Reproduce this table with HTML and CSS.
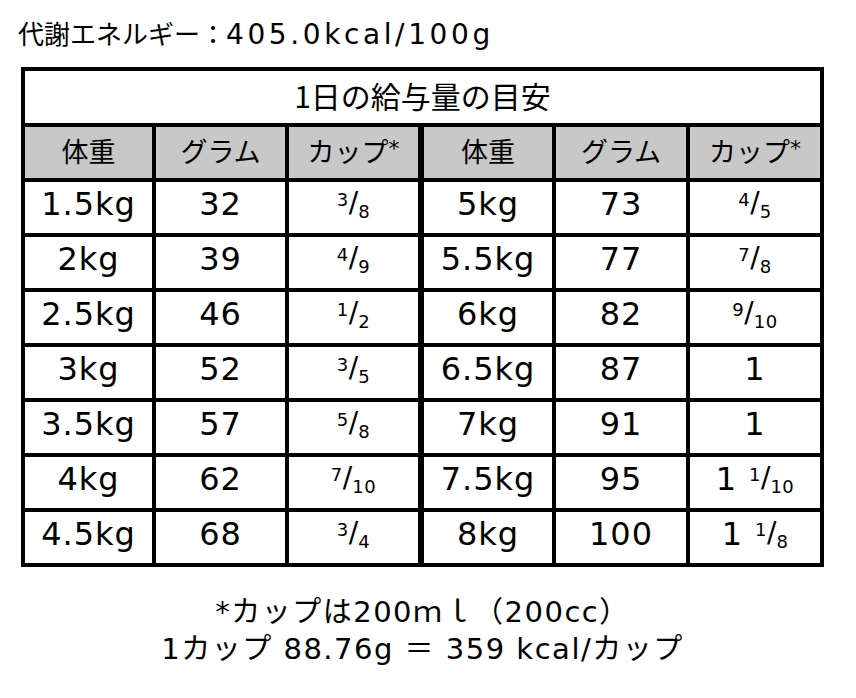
FILE: index.html
```html
<!DOCTYPE html>
<html lang="ja">
<head>
<meta charset="utf-8">
<title>1日の給与量の目安</title>
<link rel="stylesheet" href="styles.css">
</head>
<body>
<div class="page">
  <h1 class="energy">代謝エネルギー：<span class="lat">405.0kcal/100g</span></h1>

  <div class="tbl">
    <div class="cell caption">1日の給与量の目安</div>

    <div class="cell head">体重</div>
    <div class="cell head">グラム</div>
    <div class="cell head">カップ<span class="ast">*</span></div>
    <div class="cell head mid">体重</div>
    <div class="cell head">グラム</div>
    <div class="cell head">カップ<span class="ast">*</span></div>

    <div class="cell num">1.5kg</div>
    <div class="cell num">32</div>
    <div class="cell num"><span class="frac"><span class="nu">3</span>/<span class="de">8</span></span></div>
    <div class="cell num mid">5kg</div>
    <div class="cell num">73</div>
    <div class="cell num"><span class="frac"><span class="nu">4</span>/<span class="de">5</span></span></div>

    <div class="cell num">2kg</div>
    <div class="cell num">39</div>
    <div class="cell num"><span class="frac"><span class="nu">4</span>/<span class="de">9</span></span></div>
    <div class="cell num mid">5.5kg</div>
    <div class="cell num">77</div>
    <div class="cell num"><span class="frac"><span class="nu">7</span>/<span class="de">8</span></span></div>

    <div class="cell num">2.5kg</div>
    <div class="cell num">46</div>
    <div class="cell num"><span class="frac"><span class="nu">1</span>/<span class="de">2</span></span></div>
    <div class="cell num mid">6kg</div>
    <div class="cell num">82</div>
    <div class="cell num"><span class="frac"><span class="nu">9</span>/<span class="de">10</span></span></div>

    <div class="cell num">3kg</div>
    <div class="cell num">52</div>
    <div class="cell num"><span class="frac"><span class="nu">3</span>/<span class="de">5</span></span></div>
    <div class="cell num mid">6.5kg</div>
    <div class="cell num">87</div>
    <div class="cell num">1</div>

    <div class="cell num">3.5kg</div>
    <div class="cell num">57</div>
    <div class="cell num"><span class="frac"><span class="nu">5</span>/<span class="de">8</span></span></div>
    <div class="cell num mid">7kg</div>
    <div class="cell num">91</div>
    <div class="cell num">1</div>

    <div class="cell num">4kg</div>
    <div class="cell num">62</div>
    <div class="cell num"><span class="frac"><span class="nu">7</span>/<span class="de">10</span></span></div>
    <div class="cell num mid">7.5kg</div>
    <div class="cell num">95</div>
    <div class="cell num">1<span class="frac mixed"><span class="nu">1</span>/<span class="de">10</span></span></div>

    <div class="cell num">4.5kg</div>
    <div class="cell num">68</div>
    <div class="cell num"><span class="frac"><span class="nu">3</span>/<span class="de">4</span></span></div>
    <div class="cell num mid">8kg</div>
    <div class="cell num">100</div>
    <div class="cell num">1<span class="frac mixed"><span class="nu">1</span>/<span class="de">8</span></span></div>
  </div>

  <div class="note">
    <p>*カップは200ｍｌ（200cc）</p>
    <p>1カップ 88.76g ＝ 359 kcal/カップ</p>
  </div>
</div>
</body>
</html>
```

FILE: styles.css
```css
html, body {
  margin: 0;
  padding: 0;
  background: #fff;
}

body {
  font-family: "DejaVu Sans", "Noto Sans CJK JP", sans-serif;
  color: #000;
}

.page {
  padding: 16px 0 0 21px;
  width: 803px;
}

.energy {
  margin: 0 0 15px -3px;
  font-size: 26px;
  line-height: 34px;
  font-weight: normal;
  font-family: "Noto Sans CJK JP", sans-serif;
}

.energy .lat {
  font-family: "DejaVu Sans", sans-serif;
  font-size: 28px;
  letter-spacing: 3.6px;
  margin-left: 0;
}

.tbl {
  display: grid;
  grid-template-columns: 127px 129px 129px 130px 130px 130px;
  grid-template-rows: 52px repeat(8, 51px);
  gap: 4px;
  padding: 4px;
  background: #000;
  width: max-content;
}

.cell {
  display: flex;
  align-items: center;
  justify-content: center;
  background: #fff;
  white-space: nowrap;
}

.cell.mid {
  margin-left: 2px;
}

.caption {
  grid-column: 1 / -1;
  font-family: "Noto Sans CJK JP", sans-serif;
  font-size: 30px;
  padding-bottom: 4px;
}

.head {
  background: #c8c8c8;
  font-family: "Noto Sans CJK JP", sans-serif;
  font-size: 27px;
  padding-bottom: 4px;
}

.ast {
  font-family: "DejaVu Sans", sans-serif;
  font-size: 22px;
  align-self: flex-start;
  margin-top: 9px;
}

.num {
  font-size: 32px;
  letter-spacing: 1px;
  padding-bottom: 7px;
}

.frac {
  font-size: 28px;
  letter-spacing: 0;
}

.frac.mixed {
  margin-left: 12px;
}

.nu, .de {
  font-size: 18px;
  letter-spacing: 0.5px;
}

.nu {
  vertical-align: 6px;
}

.de {
  vertical-align: -6px;
}

.note {
  margin-top: 27px;
  text-align: center;
  font-size: 29px;
  letter-spacing: 1.5px;
}

.note p {
  margin: 0;
  line-height: 37px;
}
```
